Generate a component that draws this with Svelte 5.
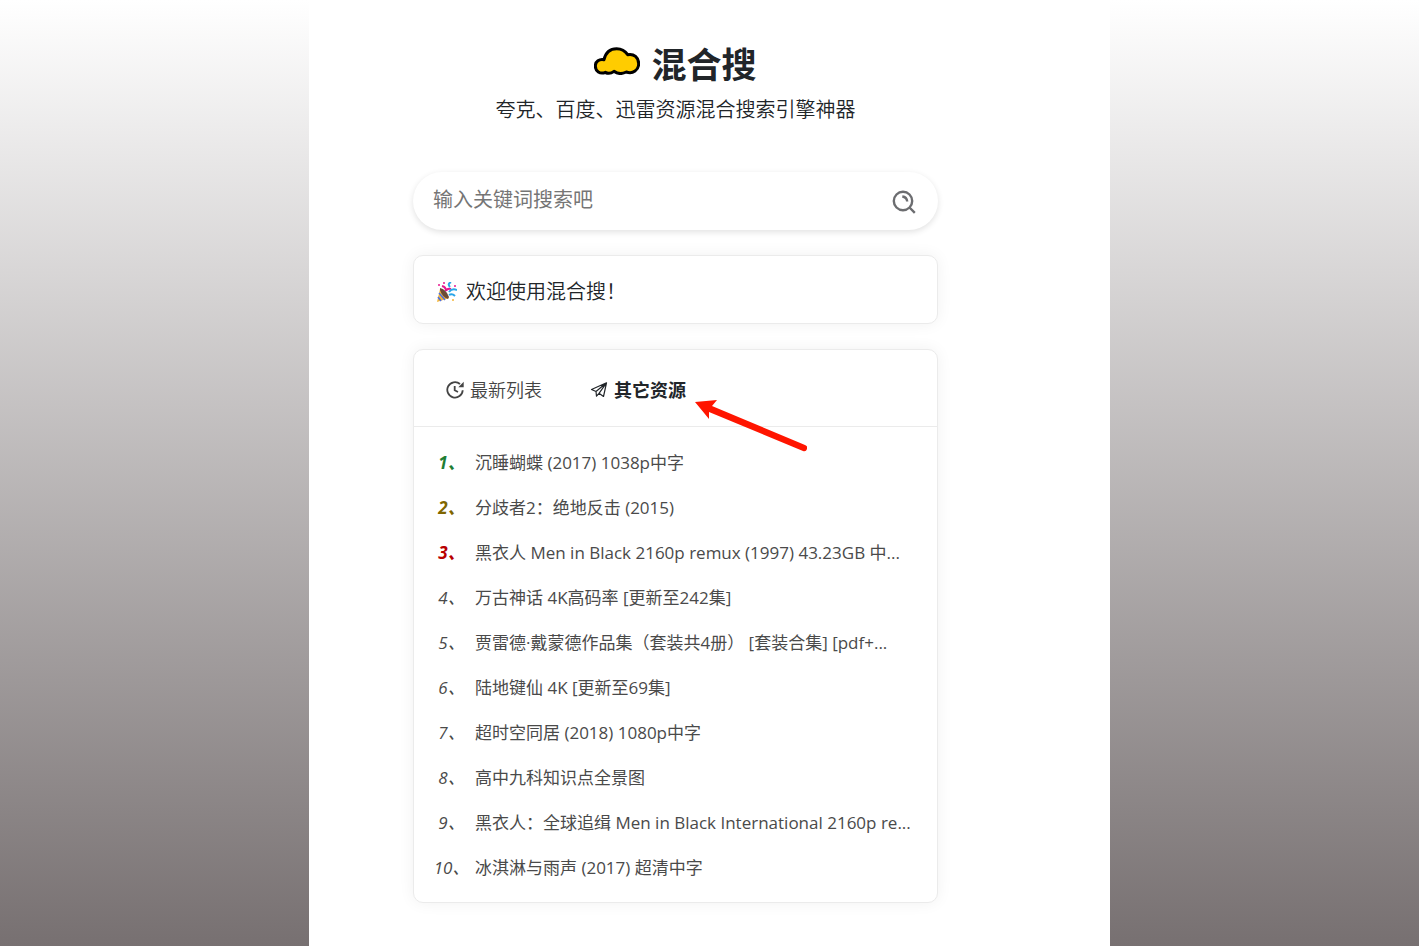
<script>
    let keyword = "";
    let activeTab = "other";

    const items = [
        "沉睡蝴蝶 (2017) 1038p中字",
        "分歧者2：绝地反击 (2015)",
        "黑衣人 Men in Black 2160p remux (1997) 43.23GB 中...",
        "万古神话 4K高码率 [更新至242集]",
        "贾雷德·戴蒙德作品集（套装共4册） [套装合集] [pdf+...",
        "陆地键仙 4K [更新至69集]",
        "超时空同居 (2018) 1080p中字",
        "高中九科知识点全景图",
        "黑衣人：全球追缉 Men in Black International 2160p re...",
        "冰淇淋与雨声 (2017) 超清中字",
    ];
</script>

<div class="page">
    <main>
        <header>
            <h1>
                <svg class="logo" viewBox="0 0 138 84" aria-hidden="true">
                    <path
                        d="M30 38 C35 16 49 5 68 5 C82 5 93 11 101 23 C120 19 134 32 134 50 C134 69 117 82 97 75 C85 81 71 81 60 73 C52 79 41 80 34 76 C18 83 4 72 4 57 C4 43 16 35 30 38 Z"
                        fill="#ffcc00"
                        stroke="#000"
                        stroke-width="9"
                        stroke-linejoin="round"
                    />
                </svg>
                <span>混合搜</span>
            </h1>
            <p>夸克、百度、迅雷资源混合搜索引擎神器</p>
        </header>

        <form class="search" on:submit|preventDefault>
            <input
                type="text"
                aria-label="关键词"
                placeholder="输入关键词搜索吧"
                bind:value={keyword}
            />
            <button type="submit" aria-label="搜索">
                <svg viewBox="0 0 24 24" aria-hidden="true">
                    <circle cx="11" cy="11" r="9.200" />
                    <path d="M17.500 17.500 L22.800 22.800 M10.300 6.500 Q14.800 7 15.200 11.500" />
                </svg>
            </button>
        </form>

        <section class="card notice">
            <svg viewBox="0 0 20 20" aria-hidden="true">
                <path d="M3 7 L12 16 L0 20 Z" fill="#f5b63a" />
                <path d="M2 11 L8 18 M1 15 L4 19" stroke="#4b6fe0" stroke-width="1.500" />
                <path d="M3 6 Q9 7 12 15 L11 17 Q5 15 3 8 Z" fill="#6b4b38" />
                <path d="M5 4 Q9 5 9 9 Q10 6 14 7" fill="none" stroke="#e6178f" stroke-width="2" />
                <path d="M14 0 Q10 2 13 5 M12 10 Q15 6 20 8 M12 13 Q15 11 18 14" fill="none" stroke="#2aa5e8" stroke-width="2" />
                <circle cx="7" cy="1" r="1" fill="#e6178f" />
                <circle cx="2" cy="3" r="1" fill="#e6178f" />
                <circle cx="18" cy="4" r="1" fill="#e6178f" />
                <circle cx="16" cy="18" r="1" fill="#f5b63a" />
            </svg>
            <span>欢迎使用混合搜！</span>
        </section>

        <section class="card">
            <div class="tabs">
                <button class:active={activeTab === "latest"} on:click={() => (activeTab = "latest")}>
                    <svg viewBox="0 0 18 18" aria-hidden="true">
                        <path d="M14 3 A7.700 7.700 0 1 0 16.700 9.200" />
                        <path d="M8.700 5 V9.300 L12 11" />
                        <path d="M17.700 0.800 V6.200 H12.300 Z" fill="currentColor" stroke="none" />
                    </svg>
                    <span>最新列表</span>
                </button>
                <button class:active={activeTab === "other"} on:click={() => (activeTab = "other")}>
                    <svg class="plane" viewBox="0 0 18 18" aria-hidden="true">
                        <path d="M1.500 8.500 L16.500 1.800 L13.500 15.500 L9 12.300 L6.500 15.200 L6 10.500 Z M6 10.500 L16.500 1.800 L9 12.300" />
                    </svg>
                    <span>其它资源</span>
                </button>
                <svg class="arrow" viewBox="0 0 112 52" aria-hidden="true">
                    <path d="M0 2 L22 0 L17 6 L110 45 A3 3 0 0 1 108 51 L14 12 L14 19 Z" fill="#ff1500" />
                </svg>
            </div>
            <ol>
                {#each items as item, index}
                    <li>
                        <i class="rank rank-{index + 1}">{index + 1}、</i>
                        <a href="#{index + 1}">{item}</a>
                    </li>
                {/each}
            </ol>
        </section>
    </main>
</div>

<style>
    :global(body) {
        margin: 0;
    }
    .page {
        min-height: 100vh;
        background: linear-gradient(#ffffff, #777071);
        color: #212529;
        font-family: "Open Sans", "Noto Sans CJK SC", sans-serif;
        font-size: 18px;
    }
    main {
        box-sizing: border-box;
        max-width: 801px;
        min-height: 100vh;
        margin: 0 auto;
        padding: 41px 172px 40px 104px;
        background: #fff;
    }
    header {
        text-align: center;
    }
    h1 {
        display: flex;
        align-items: center;
        justify-content: center;
        gap: 11px;
        margin: 0;
        font-size: 35px;
        line-height: 48px;
    }
    .logo {
        width: 46px;
        height: 28px;
        margin-bottom: 8px;
    }
    header p {
        margin: 6px 0 47px;
        font-size: 20px;
        line-height: 30px;
        font-weight: 350;
    }
    .search {
        display: flex;
        align-items: center;
        box-sizing: border-box;
        height: 58px;
        padding: 0 20px;
        border-radius: 29px;
        box-shadow: 0 2px 6px rgba(0, 0, 0, 0.12);
    }
    .search input {
        flex: 1;
        min-width: 0;
        padding: 0 0 4px;
        border: 0;
        outline: 0;
        background: none;
        font: inherit;
        font-size: 20px;
    }
    .search input::placeholder {
        color: #757575;
    }
    button {
        padding: 0;
        border: 0;
        background: none;
        color: inherit;
        font: inherit;
        cursor: pointer;
    }
    .search button {
        display: flex;
        margin: 2px 2px 0 0;
    }
    .search svg {
        width: 24px;
        height: 24px;
        fill: none;
        stroke: #6c6d70;
        stroke-width: 2.4;
    }
    .card {
        margin-top: 25px;
        border: 1px solid #ebebeb;
        border-radius: 10px;
        background: #fff;
        box-shadow: 0 0 16px rgba(0, 0, 0, 0.06);
    }
    .notice {
        display: flex;
        align-items: center;
        gap: 9px;
        padding: 21px 23px 16px;
        font-size: 20px;
        line-height: 30px;
        font-weight: 350;
    }
    .notice svg {
        width: 20px;
        height: 20px;
    }
    .tabs {
        position: relative;
        display: flex;
        gap: 48px;
        padding: 26px 32px 22px;
        border-bottom: 1px solid #ebebeb;
    }
    .tabs button {
        display: flex;
        align-items: center;
        gap: 6px;
        color: #444;
        font-weight: 350;
        line-height: 28px;
    }
    .tabs button.active {
        color: #212529;
        font-weight: 700;
    }
    .tabs button svg {
        width: 18px;
        height: 18px;
        fill: none;
        stroke: currentColor;
        stroke-width: 1.8;
    }
    .tabs button .plane {
        stroke-width: 1.2;
        stroke-linejoin: round;
    }
    .arrow {
        position: absolute;
        top: 50px;
        left: 281px;
        width: 112px;
        height: 52px;
    }
    ol {
        margin: 0;
        padding: 13px 19px 12px;
        list-style: none;
    }
    li {
        display: flex;
        gap: 5px;
        color: #4a4a4a;
        font-size: 17px;
        line-height: 45px;
    }
    .rank {
        flex: none;
        width: 37px;
        text-align: center;
    }
    .rank-1,
    .rank-2,
    .rank-3 {
        font-weight: 700;
    }
    .rank-1 {
        color: #1e7e34;
    }
    .rank-2 {
        color: #806600;
    }
    .rank-3 {
        color: #b80000;
    }
    a {
        overflow: hidden;
        color: inherit;
        text-decoration: none;
        text-overflow: ellipsis;
        white-space: nowrap;
    }
</style>
